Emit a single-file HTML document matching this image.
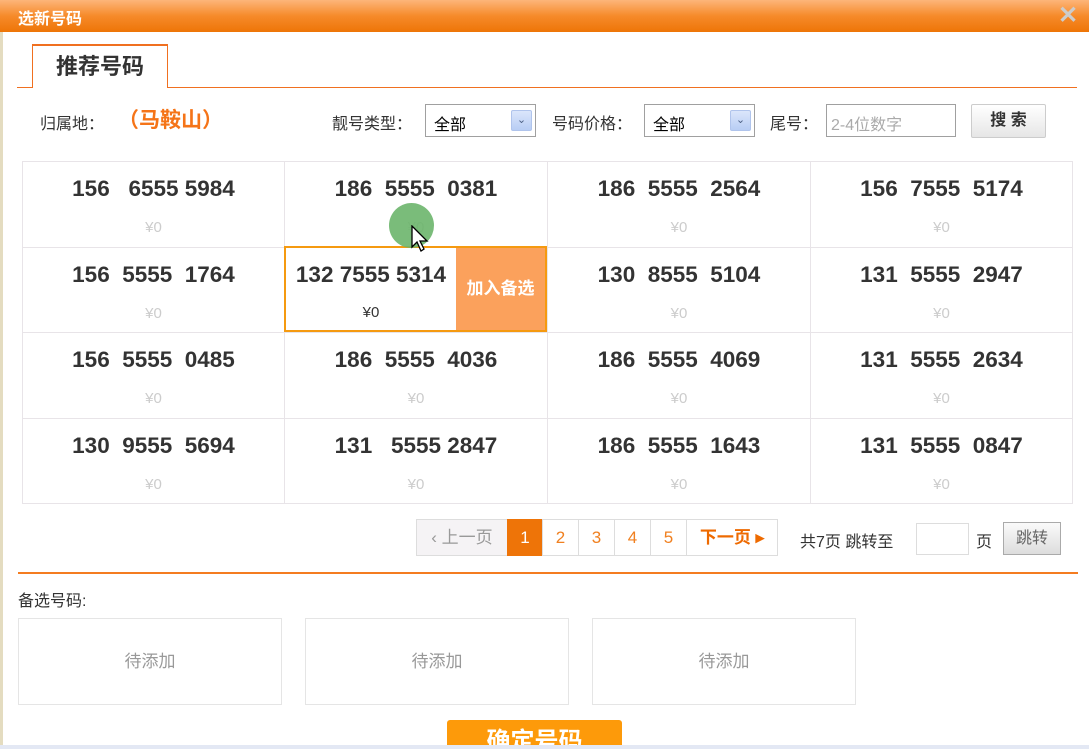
<!DOCTYPE html>
<html style="overflow:hidden;height:749px"><head><meta charset="utf-8"><style>
*{margin:0;padding:0;box-sizing:border-box}
body{width:1089px;height:749px;overflow:hidden;background:#fff;font-family:"Liberation Sans","Noto Sans CJK SC",sans-serif;position:relative}
.a{position:absolute}
.hdr{left:0;top:0;width:1089px;height:32px;background:linear-gradient(#fdb57a,#f68a2a 50%,#ee7507);}
.ttl{left:18px;top:5px;color:#fff;font-weight:bold;font-size:16px}
.cell{position:absolute;border-right:1px solid #e8e4e8;border-bottom:1px solid #e8e4e8;text-align:center}
.num{position:absolute;left:0;right:0;top:14px;font-size:22.5px;font-weight:bold;color:#333;white-space:pre}
.pr{position:absolute;left:0;right:0;top:57px;font-size:15px;color:#ccc}
.sel{border:1px solid #a0a0a0;height:33px;background:#fff;font-size:16px;padding:6px 8px}
.arr{position:absolute;right:3px;top:5px;width:21px;height:21px;background:linear-gradient(#dbe6fb,#b8cdf4);border:1px solid #b0c4ec;border-radius:2px;color:#4d6185;font-size:11px;text-align:center;line-height:19px}
.pg{top:519px;height:37px;border:1px solid #ddd;background:#fff;color:#f08020;font-size:17px;text-align:center;line-height:35px}
.box{border:1px solid #e5e5e5;width:264px;height:87px;top:618px;color:#999;font-size:17px;text-align:center;line-height:85px}
</style></head><body>
<div class="a" style="left:0;top:0;width:3px;height:749px;background:#e4dcc0"></div>
<div class="a hdr"></div>
<div class="a ttl">选新号码</div>
<div class="a" style="left:1058px;top:1px;color:#ccc;font-size:24px;font-weight:bold">✕</div>
<div class="a" style="left:17px;top:87px;width:1060px;height:1px;background:#f07020"></div>
<div class="a" style="left:32px;top:44px;width:136px;height:44px;border:1px solid #f07020;border-top:2px solid #f07020;border-bottom:none;background:#fff;font-size:22px;font-weight:bold;color:#333;text-align:center;line-height:42px">推荐号码</div>
<div class="a" style="left:40px;top:110px;font-size:16px;color:#333">归属地<span style="font-family:'Noto Sans CJK SC'">：</span></div>
<div class="a" style="left:118px;top:104px;font-size:21px;font-weight:bold;color:#f57418">（马鞍山）</div>
<div class="a" style="left:332px;top:110px;font-size:16px;color:#333">靓号类型<span style="font-family:'Noto Sans CJK SC'">：</span></div>
<div class="a sel" style="left:425px;top:104px;width:111px">全部<div class="arr">&#8964;</div></div>
<div class="a" style="left:552px;top:110px;font-size:16px;color:#333">号码价格<span style="font-family:'Noto Sans CJK SC'">：</span></div>
<div class="a sel" style="left:644px;top:104px;width:111px">全部<div class="arr">&#8964;</div></div>
<div class="a" style="left:770px;top:110px;font-size:16px;color:#333">尾号<span style="font-family:'Noto Sans CJK SC'">：</span></div>
<div class="a sel" style="left:826px;top:104px;width:130px;color:#aaa;padding:6px 4px">2-4位数字</div>
<div class="a" style="left:971px;top:104px;width:75px;height:34px;border:1px solid #ccc;border-radius:2px;background:linear-gradient(#fff,#e6e6e6);font-size:16px;font-weight:bold;text-align:center;line-height:32px;color:#333">搜 索</div>

<div class="a" style="left:22px;top:161px;width:1051px;height:343px;border-left:1px solid #e8e4e8;border-top:1px solid #e8e4e8">
<div class="cell" style="left:0;top:0;width:262px;height:86px"><div class="num">156   6555 5984</div><div class="pr">¥0</div></div>
<div class="cell" style="left:262px;top:0;width:263px;height:86px"><div class="num">186  5555  0381</div><div class="pr">¥0</div></div>
<div class="cell" style="left:525px;top:0;width:263px;height:86px"><div class="num">186  5555  2564</div><div class="pr">¥0</div></div>
<div class="cell" style="left:788px;top:0;width:262px;height:86px"><div class="num">156  7555  5174</div><div class="pr">¥0</div></div>
<div class="cell" style="left:0;top:86px;width:262px;height:85px"><div class="num">156  5555  1764</div><div class="pr">¥0</div></div>
<div class="cell" style="left:262px;top:86px;width:263px;height:85px"><div class="num">132 7555 5314</div><div class="pr">¥0</div></div>
<div class="cell" style="left:525px;top:86px;width:263px;height:85px"><div class="num">130  8555  5104</div><div class="pr">¥0</div></div>
<div class="cell" style="left:788px;top:86px;width:262px;height:85px"><div class="num">131  5555  2947</div><div class="pr">¥0</div></div>
<div class="cell" style="left:0;top:171px;width:262px;height:86px"><div class="num">156  5555  0485</div><div class="pr">¥0</div></div>
<div class="cell" style="left:262px;top:171px;width:263px;height:86px"><div class="num">186  5555  4036</div><div class="pr">¥0</div></div>
<div class="cell" style="left:525px;top:171px;width:263px;height:86px"><div class="num">186  5555  4069</div><div class="pr">¥0</div></div>
<div class="cell" style="left:788px;top:171px;width:262px;height:86px"><div class="num">131  5555  2634</div><div class="pr">¥0</div></div>
<div class="cell" style="left:0;top:257px;width:262px;height:85px"><div class="num">130  9555  5694</div><div class="pr">¥0</div></div>
<div class="cell" style="left:262px;top:257px;width:263px;height:85px"><div class="num">131   5555 2847</div><div class="pr">¥0</div></div>
<div class="cell" style="left:525px;top:257px;width:263px;height:85px"><div class="num">186  5555  1643</div><div class="pr">¥0</div></div>
<div class="cell" style="left:788px;top:257px;width:262px;height:85px"><div class="num">131  5555  0847</div><div class="pr">¥0</div></div>
</div>
<div class="a" style="left:284px;top:246px;width:263px;height:86px;border:2px solid #f59a10;background:#fff">
<div class="a" style="left:0;top:14px;width:170px;text-align:center;font-size:22.5px;font-weight:bold;color:#333;white-space:nowrap">132 7555 5314</div>
<div class="a" style="left:0;top:56px;width:170px;text-align:center;font-size:15px;color:#333">¥0</div>
<div class="a" style="left:170px;top:0;width:89px;height:82px;background:#fba15c;color:#fff;font-size:17px;font-weight:bold;text-align:center;line-height:82px">加入备选</div>
</div>
<div class="a" style="left:389px;top:203px;width:45px;height:45px;border-radius:50%;background:#6cb56c;opacity:.9"></div>
<svg class="a" style="left:411px;top:225px" width="20" height="30" viewBox="0 0 20 30"><path d="M1 1 L1 22 L6 17 L10 26 L13 24 L9 16 L16 16 Z" fill="#fff" stroke="#000" stroke-width="1.3"/></svg>

<div class="a pg" style="left:416px;width:92px;background:#f5f3f5;color:#999">‹ 上一页</div>
<div class="a pg" style="left:507px;width:36px;background:#ee7408;color:#fff;border-color:#ee7408">1</div>
<div class="a pg" style="left:542px;width:37px">2</div>
<div class="a pg" style="left:578px;width:37px">3</div>
<div class="a pg" style="left:614px;width:37px">4</div>
<div class="a pg" style="left:650px;width:37px">5</div>
<div class="a pg" style="left:686px;width:92px;font-weight:bold;color:#ee6a00">下一页 ▸</div>
<div class="a" style="left:800px;top:528px;font-size:16px;color:#333">共7页 跳转至</div>
<div class="a" style="left:916px;top:523px;width:53px;height:32px;border:1px solid #ddd"></div>
<div class="a" style="left:976px;top:528px;font-size:16px;color:#333">页</div>
<div class="a" style="left:1003px;top:522px;width:58px;height:33px;border:1px solid #aaa;background:linear-gradient(#fafafa,#ddd);font-size:16px;color:#666;text-align:center;line-height:31px">跳转</div>

<div class="a" style="left:18px;top:572px;width:1060px;height:2px;background:#f47c20"></div>
<div class="a" style="left:18px;top:587px;font-size:16px;color:#333">备选号码:</div>
<div class="a box" style="left:18px">待添加</div>
<div class="a box" style="left:305px">待添加</div>
<div class="a box" style="left:592px">待添加</div>
<div class="a" style="left:447px;top:720px;width:175px;height:25px;overflow:hidden;background:#fd9a0a;border-radius:3px 3px 0 0;color:#fff;font-size:24px;font-weight:bold;text-align:center;line-height:44px">确定号码</div>
<div class="a" style="left:0;top:745px;width:1089px;height:4px;background:#e3e8f4"></div>
</body></html>
